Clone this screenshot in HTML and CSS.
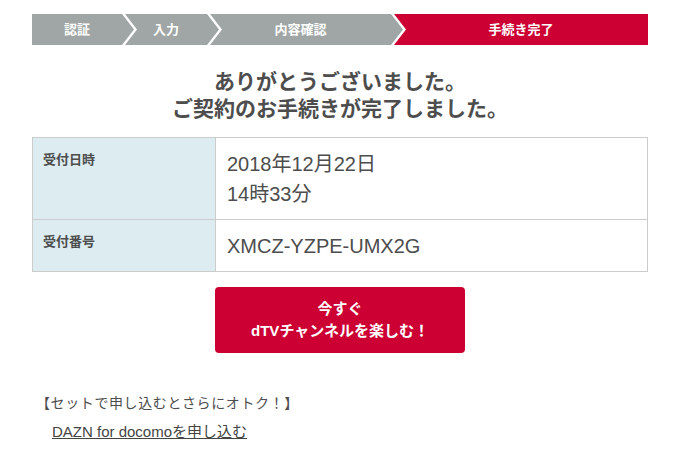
FILE: index.html
```html
<!DOCTYPE html>
<html lang="ja">
<head>
    <meta charset="UTF-8">
    <meta name="viewport" content="width=device-width, initial-scale=1.0">
    <title>手続き完了</title>
    <link rel="stylesheet" href="styles.css">
</head>
<body>
    <div class="page">
        <ol class="steps">
            <li class="step step-first">認証</li>
            <li class="step step-input">入力</li>
            <li class="step step-confirm">内容確認</li>
            <li class="step step-last is-current">手続き完了</li>
        </ol>

        <h1 class="title">ありがとうございました。<br>ご契約のお手続きが完了しました。</h1>

        <table class="result">
            <tr>
                <th>受付日時</th>
                <td>2018年12月22日<br>14時33分</td>
            </tr>
            <tr>
                <th>受付番号</th>
                <td>XMCZ-YZPE-UMX2G</td>
            </tr>
        </table>

        <div class="action">
            <a class="btn-primary" href="#">今すぐ<br>dTVチャンネルを楽しむ！</a>
        </div>

        <div class="option">
            <p class="option-lead">【セットで申し込むとさらにオトク！】</p>
            <a class="option-link" href="#">DAZN for docomoを申し込む</a>
        </div>
    </div>
</body>
</html>
```

FILE: styles.css
```css
body {
    margin: 0;
    background-color: #fff;
    color: #4d4d4d;
    font-family: "Liberation Sans", "Noto Sans CJK JP", sans-serif;
}

.page {
    width: 616px;
    padding: 14px 0 0 32px;
}

/* ステップ表示 */
.steps {
    display: flex;
    margin: 0;
    padding: 0;
    list-style: none;
}

.step {
    box-sizing: border-box;
    height: 31px;
    line-height: 31px;
    padding-right: 12px;
    margin-left: -9px;
    background-color: #a0a6a5;
    color: #fff;
    font-size: 13px;
    font-weight: bold;
    text-align: center;
    clip-path: polygon(0 0, calc(100% - 12px) 0, 100% 50%, calc(100% - 12px) 100%, 0 100%, 12px 50%);
}

.step-first {
    width: 102px;
    margin-left: 0;
    clip-path: polygon(0 0, calc(100% - 12px) 0, 100% 50%, calc(100% - 12px) 100%, 0 100%);
}

.step-input {
    width: 94px;
}

.step-confirm {
    width: 193px;
}

.step-last {
    width: 254px;
    padding-right: 0;
    clip-path: polygon(0 0, 100% 0, 100% 100%, 0 100%, 12px 50%);
}

.step.is-current {
    background-color: #cc0033;
}

.title {
    margin: 23px 0 15px;
    font-size: 21px;
    line-height: 27px;
    font-weight: bold;
    text-align: center;
    color: #4d4d4d;
}

/* 受付内容 */
.result {
    width: 100%;
    border-collapse: collapse;
}

.result th,
.result td {
    border: 1px solid #cccccc;
    vertical-align: top;
    text-align: left;
}

.result th {
    width: 162px;
    padding: 11px 10px;
    background-color: #dcecf1;
    font-size: 13px;
    line-height: 22px;
    font-weight: bold;
}

.result td {
    padding: 11px 11px 10px;
    font-size: 20px;
    line-height: 30px;
}

.action {
    display: flex;
    justify-content: center;
    margin-top: 15px;
}

.btn-primary {
    display: flex;
    align-items: center;
    justify-content: center;
    width: 250px;
    height: 66px;
    border-radius: 4px;
    background-color: #cc0033;
    color: #fff;
    font-size: 15px;
    line-height: 22px;
    font-weight: bold;
    text-align: center;
    text-decoration: none;
}

.option {
    margin-top: 40px;
    padding-left: 4px;
    font-size: 14px;
}

.option-lead {
    margin: 0 0 9px;
    line-height: 20px;
    letter-spacing: 0.6px;
}

.option-link {
    display: inline-block;
    margin-left: 16px;
    font-size: 15px;
    line-height: 20px;
    color: #444;
}
```
